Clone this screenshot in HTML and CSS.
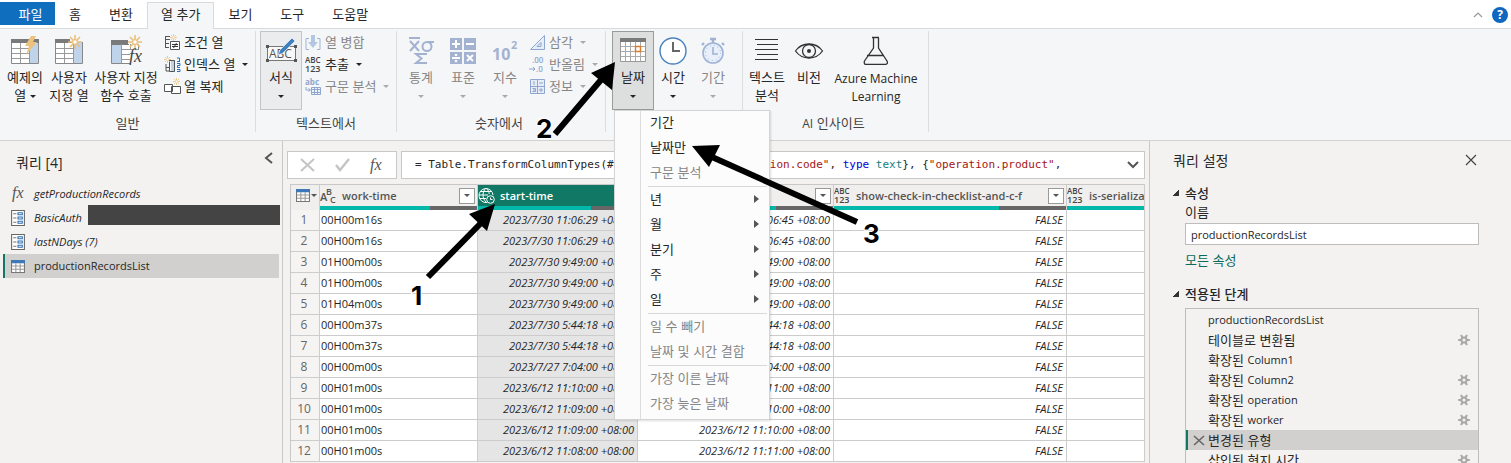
FILE: index.html
```html
<!DOCTYPE html>
<html lang="ko">
<head>
<meta charset="utf-8">
<title>Power Query 편집기</title>
<link rel="stylesheet" href="styles.css">
</head>
<body>
<svg class="defs" aria-hidden="true">
  <defs>
    <g id="spark" stroke="#e9c07c" stroke-width="1.6" fill="none">
      <path d="M7 0v4M7 10v4M0 7h4M10 7h4M2 2l3 3M9 9l3 3M12 2l-3 3M5 9l-3 3"/><circle cx="7" cy="7" r="2.4" stroke-width="1.2" fill="#fff"/>
    </g>
    <symbol id="list" viewBox="0 0 13 15"><path d="M.5.5h12v14H.5z" fill="#fff" stroke="#666"/><path d="M2 3.5h3M2 7.5h3M2 11.500h3" stroke="#777"/><path d="M6.500 2.500h4v2h-4zM6.500 6.500h4v2h-4zM6.500 10.500h4v2h-4z" fill="none" stroke="#2f6fb3"/></symbol>
    <symbol id="grid" viewBox="0 0 13 12"><path d="M.5.5h12v11H.5z" fill="#fff" stroke="#777"/><path d="M0 0h13v3H0z" fill="#3c78b8"/><path d="M1 5.500h11M1 8.500h11M4.500 3v8M8.500 3v8" stroke="#999"/></symbol>
    <symbol id="gear" viewBox="0 0 12 12"><g fill="none" stroke="#a8a8a8" stroke-width="2"><circle cx="6" cy="6" r="2.600"/><path d="M9 6h2.800M7.500 8.600l1.600 2.400M4.500 8.600l-1.600 2.400M3 6H.2M4.500 3.400L2.900 1M7.500 3.400L9.100 1"/></g></symbol>
    <symbol id="any" viewBox="0 0 17 15"><text x="0" y="6" class="glyph-any">ABC</text><text x="0" y="15" class="glyph-num">123</text></symbol>
  </defs>
</svg>

<nav class="tabs">
  <button class="tab tab-file">파일</button>
  <button class="tab">홈</button>
  <button class="tab">변환</button>
  <button class="tab tab-active">열 추가</button>
  <button class="tab">보기</button>
  <button class="tab">도구</button>
  <button class="tab">도움말</button>
  <span class="tabs-end">
    <button class="plain" aria-label="리본 축소"><svg width="10" height="6" viewBox="0 0 10 6"><path d="M1 5l4-4 4 4" fill="none" stroke="#999" stroke-width="1.200"/></svg></button>
    <button class="help" aria-label="도움말">?</button>
  </span>
</nav>

<section class="ribbon">
  <div class="group g-general">
    <div class="tools">
      <button class="big w-ex">
        <svg width="30" height="30" viewBox="0 0 30 30"><path d="M1.500 4.500h27v24h-27z" fill="#fff" stroke="#888"/><path d="M19 7h9v21h-9z" fill="#bfd3ea"/><path d="M1 4h28v4H1z" fill="#7a7a7a"/><path d="M2 13.500h17M2 18.500h17M2 23.500h17M10.500 8v20M19.500 8v20" stroke="#999"/><path d="M21 1h5l-3 6h4L16 20l3-9h-4z" fill="#ecc27d"/></svg>
        <span>예제의</span><span>열 <i class="caret"></i></span>
      </button>
      <button class="big w-custom">
        <svg width="30" height="30" viewBox="0 0 30 30"><path d="M1.500 4.500h27v24h-27z" fill="#fff" stroke="#888"/><path d="M19 7h9v21h-9z" fill="#bfd3ea"/><path d="M1 4h17v4H1z" fill="#7a7a7a"/><path d="M2 13.500h17M2 18.500h17M2 23.500h17M10.500 8v20M19.500 8v20" stroke="#999"/><path d="M16 0h14v7H16z" fill="#f5f6f7"/><use href="#spark" x="14" y="0"/></svg>
        <span>사용자</span><span>지정 열</span>
      </button>
      <button class="big w-func">
        <svg width="32" height="30" viewBox="0 0 32 30"><path d="M1.500 5.500h27v23h-27z" fill="#fff" stroke="#888"/><path d="M2 9h9v19H2z" fill="#bfd3ea"/><path d="M1 5h18v5H1z" fill="#7a7a7a"/><path d="M11.500 9v19M12 14.500h17M12 19.500h17M12 24.500h17M20.500 9v19" stroke="#999"/><path d="M20 15h12v15H20zM18 0h14v9H18z" fill="#f5f6f7"/><use href="#spark" x="18" y="0"/><text x="19" y="27" class="glyph-fx">fx</text></svg>
        <span>사용자 지정</span><span>함수 호출</span>
      </button>
      <div class="stack">
        <button class="small"><svg width="17" height="17" viewBox="0 0 17 17"><path d="M1 2.500h5M1.500 2v12M1 5.500h5M1 9.500h4M1 13.500h4" stroke="#555" fill="none"/><path d="M6.500 7.500h9v8h-9z" fill="#fff" stroke="#555"/><path d="M8 10.500h6M8 12.500h6M12.500 9l-3 5" stroke="#333"/><use href="#spark" transform="translate(6 0) scale(.5)"/></svg>조건 열</button>
        <button class="small"><svg width="17" height="17" viewBox="0 0 17 17"><path d="M2 8v7h4M5.500 4v11M5.500 4.500h5v11h-5zM2 11.500h4" stroke="#555" fill="none"/><path d="M7 5h3v10H7z" fill="#bfd3ea"/><path d="M13 2h2.500v3M13 5.500h3M13 7.500h3v2h-2.500v2H16M13 13.500h3v2h-3" stroke="#2f6fb3" fill="none"/><use href="#spark" transform="scale(.5)"/></svg>인덱스 열 <i class="caret"></i></button>
        <button class="small"><svg width="17" height="17" viewBox="0 0 17 17"><path d="M.5 6.500h8v7h-8zM7.500 8.500h9v7h-9z" fill="#fff" stroke="#555"/><use href="#spark" transform="translate(9 0) scale(.5)"/></svg>열 복제</button>
      </div>
    </div>
    <div class="caption">일반</div>
  </div>

  <div class="group g-text">
    <div class="tools">
      <button class="big w-date boxed">
        <svg width="32" height="30" viewBox="0 0 32 30"><path d="M2.500 11.500h28v14h-28z" fill="#f8f8f8" stroke="#777"/><path d="M1 10h3v3H1zM29 10h3v3h-3zM1 24h3v3H1zM29 24h3v3h-3z" fill="#555"/><text x="4" y="23" class="glyph-abc">ABC</text><path d="M13 20l2-5L27 3l3 3-12 12z" fill="#3f7fc0" stroke="#fff" stroke-width=".6"/></svg>
        <span>서식</span><span><i class="caret"></i></span>
      </button>
      <div class="stack">
        <button class="small" disabled><svg width="17" height="17" viewBox="0 0 17 17"><path d="M4 4.500H1v11h3M12 4.500h3v11h-3" fill="none" stroke="#9fb3d6"/><path d="M6 1h4v7h3l-5 6-5-6h3z" fill="#b4c7e2"/></svg>열 병합</button>
        <button class="small"><svg width="17" height="17"><use href="#any" width="17" height="15" y="1"/></svg>추출 <i class="caret"></i></button>
        <button class="small" disabled><svg width="17" height="17" viewBox="0 0 17 17"><text x="0" y="7" class="glyph-lc">abc</text><path d="M6.500 9.500h9v7h-9z" fill="#eef3fa" stroke="#8fa6cf"/><path d="M7 11.500h9M7 14.500h9M9.500 10v6M12.500 10v6M1 9v3h4M3.500 10.500l2 1.500-2 1.500" stroke="#8fa6cf" fill="none"/></svg>구문 분석 <i class="caret"></i></button>
      </div>
    </div>
    <div class="caption">텍스트에서</div>
  </div>

  <div class="group g-number">
    <div class="tools">
      <button class="big w-date" disabled>
        <svg width="28" height="30" viewBox="0 0 28 30"><g fill="none" stroke="#a3b2d0" stroke-width="2"><path d="M2 3h11M3 6l9 10M12 6L3 16M27 7h-6"/><circle cx="20" cy="11.500" r="4.500"/><path d="M19 20v-1H9l5.500 4.500L9 28h10v-1"/></g></svg>
        <span>통계</span><span><i class="caret"></i></span>
      </button>
      <button class="big w-date" disabled>
        <svg width="28" height="30" viewBox="0 0 28 30"><path d="M1 3h12v12H1zM15 3h12v12H15zM1 17h12v12H1zM15 17h12v12H15z" fill="#a3b2d0"/><path d="M7 5v8M3 9h8M17 9h8M3 23h8M18 20l6 6M24 20l-6 6" stroke="#fff" stroke-width="2"/><circle cx="7" cy="20" r="1.300" fill="#fff"/><circle cx="7" cy="26" r="1.300" fill="#fff"/></svg>
        <span>표준</span><span><i class="caret"></i></span>
      </button>
      <button class="big w-date" disabled>
        <svg width="28" height="30" viewBox="0 0 28 30"><text x="1" y="25" class="glyph-ten">10</text><text x="20" y="14" class="glyph-two">2</text></svg>
        <span>지수</span><span><i class="caret"></i></span>
      </button>
      <div class="stack">
        <button class="small" disabled><svg width="17" height="17" viewBox="0 0 17 17"><path d="M1.500 15.500h14v-14zM8 12.500h4v-4z" fill="#e6edf7" stroke="#8fa6cf"/></svg>삼각 <i class="caret"></i></button>
        <button class="small" disabled><svg width="17" height="17" viewBox="0 0 17 17"><text x="3" y="7" class="glyph-dec">.00</text><text x="7" y="16" class="glyph-dec">.0</text><path d="M0 13h6M4 11l2 2-2 2" stroke="#8fa6cf" fill="none"/></svg>반올림 <i class="caret"></i></button>
        <button class="small" disabled><svg width="17" height="17" viewBox="0 0 17 17"><path d="M1.500 1.500h14v14h-14zM8.500 1v15M1 8.500h15" fill="#e6edf7" stroke="#8fa6cf"/><path d="M10 5h4M10 12h4M12 10v4M5 3v4M3.500 10.500h3v3h-3M4 12h2" stroke="#8fa6cf" fill="none"/></svg>정보 <i class="caret"></i></button>
      </div>
    </div>
    <div class="caption">숫자에서</div>
  </div>

  <div class="group g-date">
    <div class="tools">
      <div class="menu-anchor">
        <button class="big w-date boxed pressed" aria-haspopup="menu" aria-expanded="true">
          <svg width="28" height="30" viewBox="0 0 28 30"><path d="M1.500 6.500h25v20h-25z" fill="#fff" stroke="#999"/><path d="M1 3h26v4H1z" fill="#7a7a7a"/><path d="M2 11.500h24M2 16.500h24M2 21.500h24M6.500 7v19M11.500 7v19M16.500 7v19M21.500 7v19" stroke="#aaa"/><path d="M16.500 11.500h5v5h-5z" fill="#fff" stroke="#e07b28" stroke-width="1.400"/></svg>
          <span>날짜</span><span><i class="caret"></i></span>
        </button>
        <div class="menu" role="menu">
          <button role="menuitem">기간</button>
          <button role="menuitem">날짜만</button>
          <button role="menuitem" disabled>구문 분석</button>
          <hr>
          <button role="menuitem" class="sub">년</button>
          <button role="menuitem" class="sub">월</button>
          <button role="menuitem" class="sub">분기</button>
          <button role="menuitem" class="sub">주</button>
          <button role="menuitem" class="sub">일</button>
          <hr>
          <button role="menuitem" disabled>일 수 빼기</button>
          <button role="menuitem" disabled>날짜 및 시간 결합</button>
          <hr>
          <button role="menuitem" disabled>가장 이른 날짜</button>
          <button role="menuitem" disabled>가장 늦은 날짜</button>
        </div>
      </div>
      <button class="big w-time">
        <svg width="30" height="30" viewBox="0 0 30 30"><circle cx="15" cy="16" r="13" fill="#fff" stroke="#4a82bd" stroke-width="1.400"/><path d="M15 7v9h7" fill="none" stroke="#666" stroke-width="2"/></svg>
        <span>시간</span><span><i class="caret"></i></span>
      </button>
      <button class="big w-date" disabled>
        <svg width="30" height="30" viewBox="0 0 30 30"><circle cx="15" cy="18" r="10" fill="#e9f0fa" stroke="#9fb3d6" stroke-width="1.600"/><path d="M12 4h6M15 4v4M24 8l2 2M6 8l-2 2" stroke="#9fb3d6" stroke-width="2.400"/><circle cx="15" cy="18" r="7.500" fill="none" stroke="#9fb3d6" stroke-dasharray="1 3"/><path d="M15 12v7h5" fill="none" stroke="#9fb3d6" stroke-width="1.600"/></svg>
        <span>기간</span><span><i class="caret"></i></span>
      </button>
    </div>
  </div>

  <div class="group g-ai">
    <div class="tools">
      <button class="big w-date">
        <svg width="30" height="30" viewBox="0 0 30 30"><path d="M3 4.500h23M5 9.500h21M3 14.500h23M5 19.500h21M3 24.500h23" stroke="#333" stroke-width="1.200"/></svg>
        <span>텍스트</span><span>분석</span>
      </button>
      <button class="big w-date">
        <svg width="30" height="30" viewBox="0 0 30 30"><path d="M1.500 16C5 11 10 9 15 9s10 2 13.500 7C25 21 20 23 15 23S5 21 1.500 16z" fill="none" stroke="#333" stroke-width="1.300"/><circle cx="15" cy="16" r="6.500" fill="none" stroke="#333" stroke-width="1.300"/><circle cx="15" cy="16" r="2" fill="#333"/></svg>
        <span>비전</span>
      </button>
      <button class="big w-aml">
        <svg width="30" height="30" viewBox="0 0 30 30"><path d="M11 2.500h7M12.500 3v10L3.500 26q-1 3.500 2 3.500h18Q27.500 29.500 26 26l-8.500-13V3M6 20.500h17" fill="none" stroke="#333" stroke-width="1.300"/></svg>
        <span>Azure Machine</span><span>Learning</span>
      </button>
    </div>
    <div class="caption"><span class="latin-m">AI</span> 인사이트</div>
  </div>
</section>

<main class="work">
  <aside class="queries">
    <header class="pane-head"><h2>쿼리 [4]</h2><button class="plain" aria-label="축소"><svg width="10" height="12" viewBox="0 0 10 12"><path d="M8 1L2 6l6 5" fill="none" stroke="#555" stroke-width="2"/></svg></button></header>
    <ul class="query-list">
      <li class="query"><svg width="14" height="18" viewBox="0 0 14 18"><text x="1" y="13" class="glyph-fx-s">fx</text></svg><em>getProductionRecords</em></li>
      <li class="query"><svg width="14" height="16"><use href="#list" width="14" height="16"/></svg><em>BasicAuth</em><span class="redacted"></span></li>
      <li class="query"><svg width="14" height="16"><use href="#list" width="14" height="16"/></svg><em>lastNDays (7)</em></li>
      <li class="query query-on"><svg width="14" height="13"><use href="#grid" width="14" height="13"/></svg><span>productionRecordsList</span></li>
    </ul>
  </aside>

  <section class="center">
    <div class="formula-row">
      <div class="formula-tools">
        <button class="plain" aria-label="취소"><svg width="15" height="14" viewBox="0 0 15 14"><path d="M1 1l13 12M14 1L1 13" stroke="#c4c4c4" stroke-width="2"/></svg></button>
        <button class="plain" aria-label="적용"><svg width="15" height="14" viewBox="0 0 15 14"><path d="M1 7l4 5L14 1" fill="none" stroke="#c4c4c4" stroke-width="2.400"/></svg></button>
        <button class="plain" aria-label="함수"><svg width="15" height="18" viewBox="0 0 15 18"><text x="1" y="14" class="glyph-fx-s">fx</text></svg></button>
      </div>
      <div class="formula"><code>= Table.TransformColumnTypes(#"확장된 worker",{{<b class="str">"operation.code"</b>, <b class="kw">type</b> <b class="ty">text</b>}, {<b class="str">"operation.product"</b>,</code><button class="plain" aria-label="확장"><svg width="12" height="8" viewBox="0 0 12 8"><path d="M1 1l5 5 5-5" fill="none" stroke="#555" stroke-width="2"/></svg></button></div>
    </div>
    <div class="grid-wrap">
      <table class="data">
        <colgroup><col class="c-num"><col class="c-work"><col class="c-start"><col class="c-end"><col class="c-show"><col></colgroup>
        <thead>
          <tr>
            <th><div class="th th-corner"><svg width="14" height="13"><use href="#grid" width="14" height="13"/></svg><i class="caret"></i></div></th>
            <th><div class="th"><svg width="17" height="17" viewBox="0 0 17 17"><text x="0" y="14" class="glyph-t">A</text><text x="6" y="8" class="glyph-t glyph-ts">B</text><text x="10" y="16" class="glyph-t glyph-ts">C</text></svg><span>work-time</span><button class="filter" aria-label="필터"><i class="caret"></i></button></div></th>
            <th class="picked"><div class="th"><svg width="17" height="17" viewBox="0 0 17 17"><g fill="none" stroke="#fff"><path d="M9 15.500A7 7 0 1 1 15 8M8 1C4 5 4 11 8 15M8 1c2.500 2 3 4 3.200 6M1 8h9M2 4.500h12M2 11.500h6"/><circle cx="12.500" cy="12.500" r="3.800"/><path d="M12.500 10.500v2h2"/></g></svg><span>start-time</span></div></th>
            <th><div class="th"><svg width="17" height="15"><use href="#any" width="17" height="15"/></svg><span>end-time</span><button class="filter" aria-label="필터"><i class="caret"></i></button></div></th>
            <th><div class="th"><svg width="17" height="15"><use href="#any" width="17" height="15"/></svg><span>show-check-in-checklist-and-c-f</span><button class="filter" aria-label="필터"><i class="caret"></i></button></div></th>
            <th><div class="th"><svg width="17" height="15"><use href="#any" width="17" height="15"/></svg><span>is-serializable</span></div></th>
          </tr>
          <tr class="quality">
            <td></td>
            <td><div class="q" style="width:70%"></div></td><td><div class="q" style="width:71%"></div></td><td><div class="q" style="width:71%"></div></td><td><div class="q" style="width:71%"></div></td><td><div class="q" style="width:100%"></div></td>
          </tr>
        </thead>
        <tbody>
          <tr><th>1</th><td>00H00m16s</td><td>2023/7/30 11:06:29 +08:00</td><td>2023/7/30 11:06:45 +08:00</td><td>FALSE</td><td></td></tr>
          <tr><th>2</th><td>00H00m16s</td><td>2023/7/30 11:06:29 +08:00</td><td>2023/7/30 11:06:45 +08:00</td><td>FALSE</td><td></td></tr>
          <tr><th>3</th><td>01H00m00s</td><td>2023/7/30 9:49:00 +08:00</td><td>2023/7/30 10:49:00 +08:00</td><td>FALSE</td><td></td></tr>
          <tr><th>4</th><td>01H00m00s</td><td>2023/7/30 9:49:00 +08:00</td><td>2023/7/30 10:49:00 +08:00</td><td>FALSE</td><td></td></tr>
          <tr><th>5</th><td>01H04m00s</td><td>2023/7/30 9:49:00 +08:00</td><td>2023/7/30 10:49:00 +08:00</td><td>FALSE</td><td></td></tr>
          <tr><th>6</th><td>00H00m37s</td><td>2023/7/30 5:44:18 +08:00</td><td>2023/7/30 5:44:18 +08:00</td><td>FALSE</td><td></td></tr>
          <tr><th>7</th><td>00H00m37s</td><td>2023/7/30 5:44:18 +08:00</td><td>2023/7/30 5:44:18 +08:00</td><td>FALSE</td><td></td></tr>
          <tr><th>8</th><td>00H00m00s</td><td>2023/7/27 7:04:00 +08:00</td><td>2023/7/27 7:04:00 +08:00</td><td>FALSE</td><td></td></tr>
          <tr><th>9</th><td>00H01m00s</td><td>2023/6/12 11:10:00 +08:00</td><td>2023/6/12 11:11:00 +08:00</td><td>FALSE</td><td></td></tr>
          <tr><th>10</th><td>00H01m00s</td><td>2023/6/12 11:09:00 +08:00</td><td>2023/6/12 11:10:00 +08:00</td><td>FALSE</td><td></td></tr>
          <tr><th>11</th><td>00H01m00s</td><td>2023/6/12 11:09:00 +08:00</td><td>2023/6/12 11:10:00 +08:00</td><td>FALSE</td><td></td></tr>
          <tr><th>12</th><td>00H01m00s</td><td>2023/6/12 11:08:00 +08:00</td><td>2023/6/12 11:11:00 +08:00</td><td>FALSE</td><td></td></tr>
        </tbody>
      </table>
    </div>
  </section>

  <aside class="settings">
    <header class="pane-head"><h2>쿼리 설정</h2><button class="plain" aria-label="닫기"><svg width="12" height="12" viewBox="0 0 12 12"><path d="M1 1l10 10M11 1L1 11" stroke="#444" stroke-width="1.200"/></svg></button></header>
    <h3><i class="fold"></i>속성</h3>
    <div class="props">
      <label for="qname">이름</label>
      <input id="qname" type="text" value="productionRecordsList">
      <a href="#all">모든 속성</a>
    </div>
    <h3><i class="fold"></i>적용된 단계</h3>
    <ul class="steps">
      <li><span class="latin">productionRecordsList</span></li>
      <li>테이블로 변환됨<svg width="12" height="12"><use href="#gear"/></svg></li>
      <li>확장된 <span class="latin">Column1</span></li>
      <li>확장된 <span class="latin">Column2</span><svg width="12" height="12"><use href="#gear"/></svg></li>
      <li>확장된 <span class="latin">operation</span><svg width="12" height="12"><use href="#gear"/></svg></li>
      <li>확장된 <span class="latin">worker</span><svg width="12" height="12"><use href="#gear"/></svg></li>
      <li class="step-on"><button class="plain" aria-label="단계 삭제"><svg width="12" height="11" viewBox="0 0 12 11"><path d="M1 1l10 9M11 1L1 10" stroke="#666" stroke-width="1.600"/></svg></button>변경된 유형</li>
      <li>삽입된 현지 시간<svg width="12" height="12"><use href="#gear"/></svg></li>
    </ul>
  </aside>
</main>

<svg class="notes" width="1511" height="463" viewBox="0 0 1511 463">
  <g stroke="#000" stroke-width="6"><path d="M428 277l55-56M555 134l51-60M857 222L712 157"/></g>
  <path d="M495 204l-26 10 18 17zM615 62l-24 11 21 17zM692 146l28-1-11 22z"/>
  <g class="note-num"><text x="411" y="305">1</text><text x="536" y="138">2</text><text x="863" y="243">3</text></g>
</svg>
</body>
</html>
```
FILE: styles.css
```css
* { box-sizing: border-box; }
body {
  margin: 0;
  height: 100vh;
  display: flex;
  flex-direction: column;
  position: relative;
  overflow: hidden;
  background: #f3f2f1;
  color: #262626;
  font: 13px/18px "Noto Sans CJK KR", sans-serif;
}
button { font: inherit; color: inherit; background: none; border: 0; padding: 0; }
button:disabled { color: #868686; }
h2, h3, ul { margin: 0; padding: 0; font-weight: 400; list-style: none; }
.defs { position: absolute; width: 0; height: 0; }
.plain { display: flex; align-items: center; justify-content: center; }
.latin { font-family: "Open Sans", sans-serif; font-size: 11px; }
.latin-m { font-family: "Open Sans", sans-serif; font-size: 12px; }
.caret {
  display: inline-block;
  border: 3px solid transparent;
  border-top-color: currentColor;
  border-bottom: 0;
  vertical-align: middle;
}
button:disabled .caret { border-top-color: #aaa; }

/* tabs */
.tabs { display: flex; align-items: stretch; height: 29px; padding-top: 2px; background: #fff; border-bottom: 1px solid #d9dadc; }
.tab { padding: 0 14px 3px; }
.tab-file { background: #106ebe; color: #fff; width: 55px; margin-bottom: 3px; padding: 0 0 0 6px; }
.tab-active { background: #f5f6f7; border: 1px solid #d9dadc; border-bottom: 0; margin-bottom: -1px; padding: 0 13px 4px; }
.tabs-end { margin-left: auto; display: flex; align-items: center; gap: 9px; padding: 0 3px 0 0; }
.help { width: 16px; height: 16px; border-radius: 50%; background: #0f67c0; color: #fff; font: bold 12px/16px "Open Sans", sans-serif; }

/* ribbon */
.ribbon { display: flex; height: 112px; padding: 2px 0 8px; background: #f5f6f7; border-bottom: 1px solid #d2d2d2; }
.group { display: flex; flex-direction: column; border-right: 1px solid #dcdddf; }
.g-general { width: 256px; }
.g-text { width: 141px; }
.g-number { width: 209px; }
.g-date { width: 137px; }
.g-ai { width: 186px; }
.g-text .tools { padding-left: 4px; }
.g-number .tools, .g-ai .tools { padding-left: 3px; }
.g-date .tools { padding-left: 6px; }
.tools { display: flex; height: 80px; align-items: flex-start; }
.caption { flex: 1; text-align: center; line-height: 25px; color: #444; white-space: nowrap; }
.g-number .caption, .g-ai .caption { padding-right: 4px; }
.big { display: flex; flex-direction: column; align-items: center; height: 79px; padding-top: 3px; white-space: nowrap; border: 1px solid transparent; }
.big svg { margin-bottom: 3px; flex: none; }
.w-ex { width: 50px; }
.w-custom { width: 38px; }
.w-func { width: 76px; }
.w-date { width: 42px; }
.w-time { width: 38px; }
.w-aml { width: 92px; font: 12px/18px "Open Sans", sans-serif; }
.w-aml svg { margin-bottom: 5px; }
.boxed { background: #ebecee; border-color: #c3c4c6; }
.pressed { background: #dcdfde; border-color: #989c9b; }
.stack { display: flex; flex-direction: column; }
.small { display: flex; align-items: center; gap: 3px; height: 22px; white-space: pre; }
.g-text .stack { padding-left: 3px; }
.g-number .stack { padding-left: 3px; }

/* drop-down menu */
.menu-anchor { position: relative; }
.menu {
  position: absolute;
  top: 100%;
  left: 2px;
  z-index: 5;
  width: 156px;
  padding-bottom: 2px;
  background: linear-gradient(90deg, #fbfbfb 25px, #ddd 25px, #ddd 26px, #fcfcfc 26px);
  border: 1px solid #d4d4d4;
  box-shadow: 1px 1px 2px #0002;
}
.menu button { display: flex; align-items: center; width: 100%; height: 25px; padding: 0 10px 3px 35px; }
.menu hr { margin: 0 2px 1px 33px; border: 0; border-top: 1px solid #d8d8d8; }
.sub { justify-content: space-between; }
.sub::after { content: ""; border: 4px solid transparent; border-left: 5px solid #555; border-right: 0; }

/* work area */
.work { flex: 1; min-height: 0; display: grid; grid-template-columns: 283px 1fr 361px; }
.pane-head { display: flex; align-items: center; justify-content: space-between; }
h2 { font-size: 15px; line-height: 24px; }
.queries { border-right: 1px solid #c8c8c8; padding: 10px 3px 0 3px; font-family: "Open Sans", "Noto Sans CJK KR", sans-serif; font-size: 11px; }
.queries h2 { font-size: 14px; }
.queries .pane-head { padding: 0 5px 0 13px; margin-bottom: 7px; }
.queries .pane-head .plain { margin-bottom: 10px; }
.query { display: flex; align-items: center; height: 24px; padding-left: 8px; }
.query svg { margin-right: 9px; }
.query-on { background: #d2d0ce; border-left: 2px solid #117865; padding-left: 6px; }
.redacted { flex: 1; height: 20px; margin: -6px -1px 0 6px; background: #444; }
.center { min-width: 0; display: flex; flex-direction: column; border-right: 1px solid #c8c8c8; padding: 10px 4px 0 4px; }
.formula-row { display: flex; gap: 4px; height: 28px; }
.formula-tools { display: flex; align-items: center; width: 110px; padding: 0 12px; justify-content: space-between; background: #fff; border: 1px solid #c8c8c8; }
.formula { flex: 1; min-width: 0; display: flex; align-items: center; justify-content: space-between; padding: 0 5px 0 13px; background: #fff; border: 1px solid #c8c8c8; }
.formula code { font: 11px/18px "DejaVu Sans Mono", "Noto Sans CJK KR", monospace; white-space: pre; overflow: hidden; }
.formula b { font-weight: 400; }
.str { color: #a31515; }
.kw { color: #0000e0; }
.ty { color: #0f8080; }
.grid-wrap { flex: 1; min-height: 0; margin: 5px 0 0 3px; overflow: hidden; }
.data { width: 100%; table-layout: fixed; border-collapse: separate; border-spacing: 0; border-left: 1px solid #c8c8c8; font: 11px/20px "Open Sans", sans-serif; }
.c-num { width: 29px; }
.c-work { width: 158px; }
.c-start { width: 160px; }
.c-end { width: 196px; }
.c-show { width: 233px; }
.data th, .data td { height: 21px; padding: 0 3px 0 1px; border-right: 1px solid #ccc; border-bottom: 1px solid #ccc; overflow: hidden; white-space: nowrap; }
.data thead th { border-top: 1px solid #c8c8c8; padding: 0; background: #f0efee; text-align: left; color: #555; border-bottom: 0; font-weight: 600; }
.data thead .picked { background: #117865; color: #fff; }
.th { display: flex; align-items: center; height: 21px; gap: 5px; padding: 0 2px 0 0; }
.th svg { flex: none; }
.data .th-corner { gap: 1px; padding-left: 5px; }
.filter { margin-left: auto; width: 16px; height: 16px; background: #fff; border: 1px solid #999; color: #555; display: flex; align-items: center; justify-content: center; flex: none; }
.data .quality td { height: 4px; padding: 0; line-height: 0; border-bottom: 0; background: #666; }
.data .quality td:first-child { background: #f0efee; }
.q { height: 4px; background: #01b8aa; }
.data tbody td { background: #fff; }
.data tbody th { font-weight: 400; color: #666; background: #f5f4f3; text-align: center; font-size: 12px; }
.data tbody td:nth-child(n+3) { text-align: right; font-style: italic; }
.data tbody td:nth-child(3) { background: #e5e5e5; }

/* settings */
.settings { padding: 7px 32px 0 23px; min-width: 0; display: flex; flex-direction: column; }
.settings h2 { font-size: 14px; }
.settings .pane-head { padding-right: 2px; margin-bottom: 11px; }
h3 { display: flex; align-items: center; gap: 6px; font-size: 13px; line-height: 20px; font-weight: 500; }
.fold { width: 6px; height: 6px; background: linear-gradient(135deg, transparent 50%, #333 50%); }
.props { display: flex; flex-direction: column; padding-left: 12px; margin-bottom: 15px; }
.props input { height: 22px; margin: 2px 0 6px; border: 1px solid #bdbdbd; background: #fff; padding: 0 5px; font: 11px "Open Sans", sans-serif; color: #262626; }
.props a { color: #0b6a5a; text-decoration: none; }
.steps { margin: 4px 0 0 12px; flex: 1; border: 1px solid #bdbdbd; border-bottom: 0; padding-top: 1px; overflow: hidden; }
.steps li { display: flex; align-items: center; height: 20px; padding: 0 8px 0 22px; white-space: pre; }
.steps li > svg { margin-left: auto; }
.steps .step-on { background: #d2d0ce; border-left: 2px solid #117865; padding-left: 5px; gap: 3px; }

/* annotations */
.notes { position: absolute; left: 0; top: 0; z-index: 10; pointer-events: none; }
.note-num { font: bold 26px Inter, sans-serif; stroke: #fff; stroke-width: 2px; paint-order: stroke; }

/* lettering inside icons */
.glyph-fx { font: italic 18px "Liberation Serif", serif; fill: #444; }
.glyph-fx-s { font: italic 16px "Liberation Serif", serif; fill: #555; }
.glyph-abc { font: 12px "Open Sans", sans-serif; fill: #555; }
.glyph-any { font: 600 8px "Open Sans", sans-serif; fill: #444; }
.glyph-num { font: 600 9px "Open Sans", sans-serif; fill: #444; }
.glyph-lc { font: bold 8px "Open Sans", sans-serif; fill: #8fa6cf; }
.glyph-dec { font: 600 8px "Open Sans", sans-serif; fill: #8fa6cf; }
.glyph-ten { font: bold 16px "Open Sans", sans-serif; fill: #a3b2d0; }
.glyph-two { font: bold 11px "Open Sans", sans-serif; fill: #a3b2d0; }
.glyph-t { font: 600 11px "Open Sans", sans-serif; fill: #555; }
.glyph-ts { font-size: 9px; }
```
